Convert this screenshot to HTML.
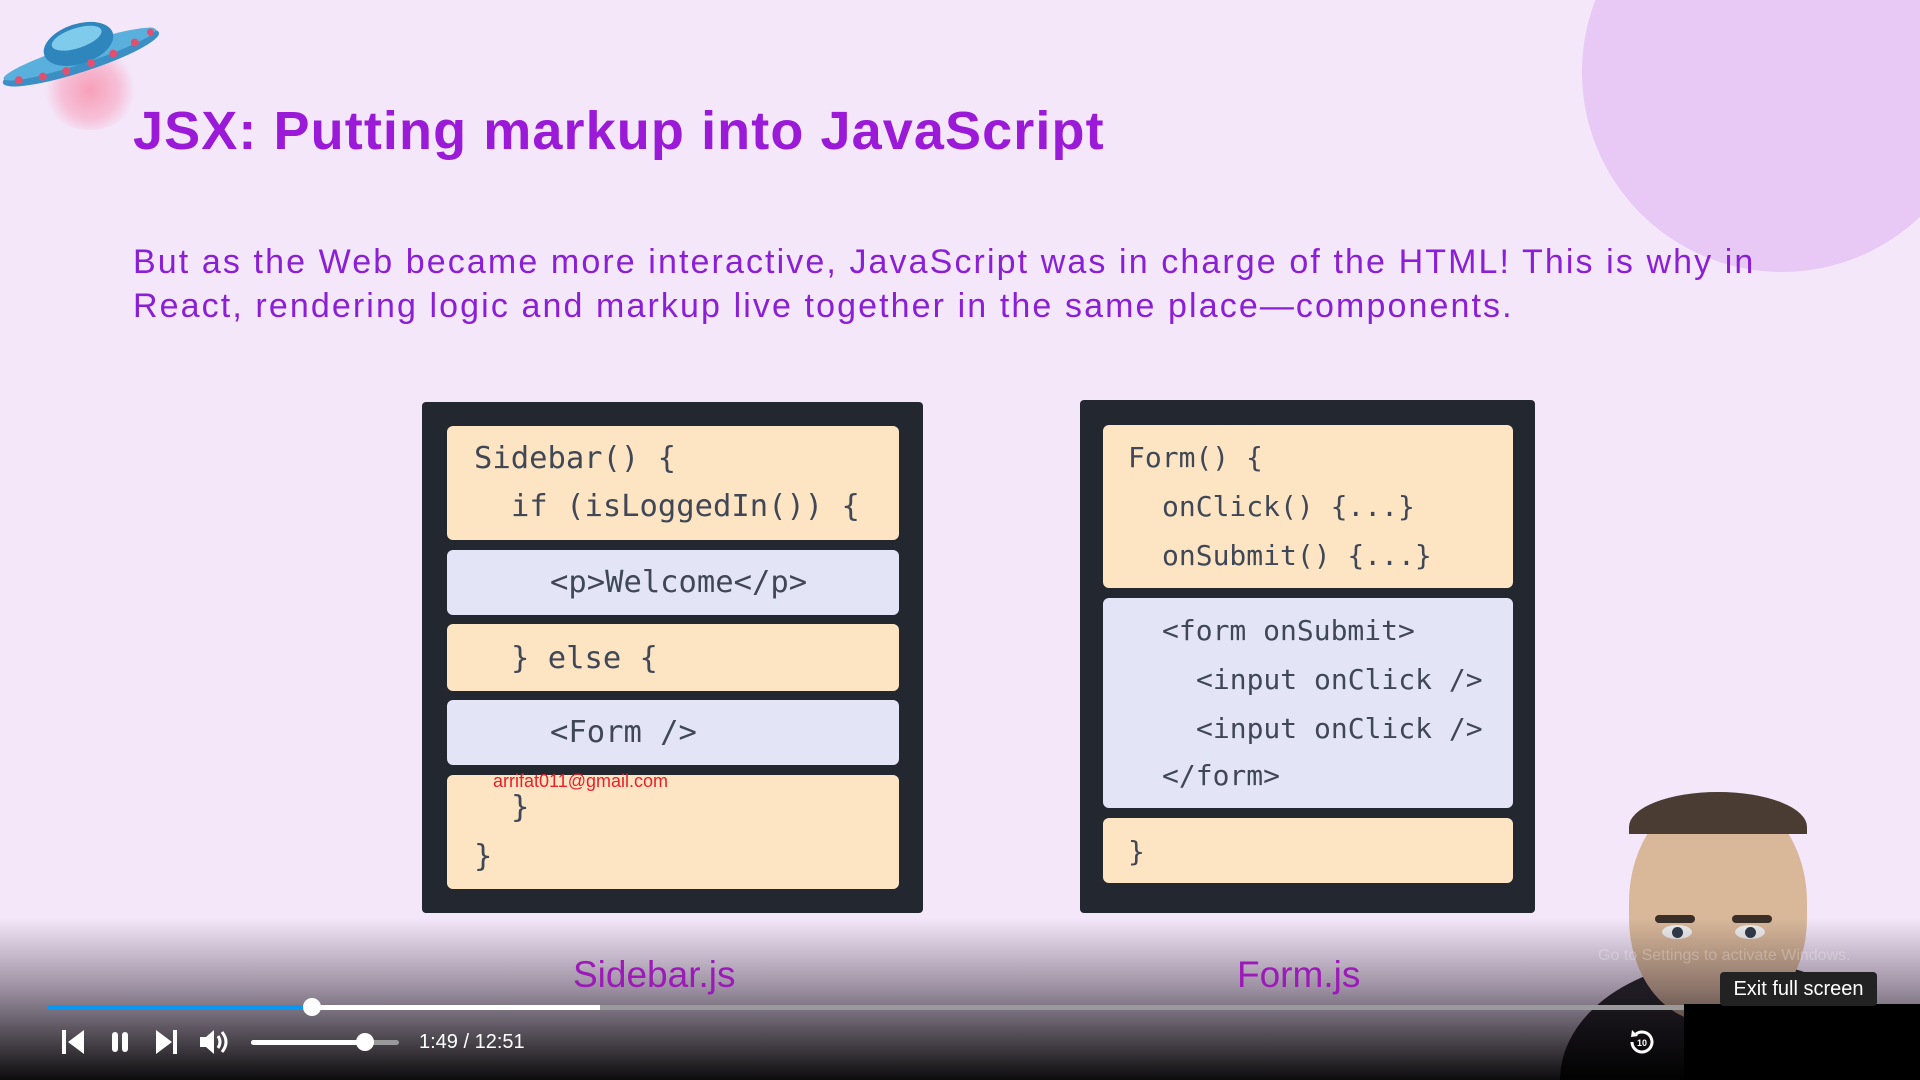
<!DOCTYPE html>
<html><head><meta charset="utf-8"><style>
*{margin:0;padding:0;box-sizing:border-box}
html,body{width:1920px;height:1080px;overflow:hidden}
body{background:#f4e7fa;position:relative;font-family:"Liberation Sans",sans-serif}
.abs{position:absolute}
.t{position:absolute;white-space:nowrap;font-family:"DejaVu Sans Mono","Liberation Mono",monospace;color:#404756;line-height:1;transform:translateY(-50%)}
.L{font-size:30.5px}
.R{font-size:28px}
.blk{position:absolute;border-radius:6px}
.y{background:#fde5c4}
.b{background:#e3e5f7}
</style></head><body>
<div class="abs" style="left:1582px;top:-128px;width:400px;height:400px;border-radius:50%;background:#e8c8f5"></div>

<!-- UFO -->
<div class="abs" style="left:40px;top:50px;width:100px;height:80px;border-radius:50%;background:radial-gradient(circle,#f7a0b8 0%,#f6c0d8 45%,rgba(244,231,250,0) 70%)"></div>
<svg class="abs" style="left:0;top:10px" width="165" height="80" viewBox="0 0 165 80">
<g transform="rotate(-18 80 45)">
<ellipse cx="80" cy="48" rx="82" ry="14" fill="#3b8fc4"/>
<ellipse cx="80" cy="44" rx="80" ry="10" fill="#5ab0dc"/>
<ellipse cx="82" cy="34" rx="36" ry="20" fill="#2f86bd"/>
<ellipse cx="82" cy="28" rx="26" ry="10" fill="#7fcbeb"/>
<g fill="#e2506f"><circle cx="14" cy="50" r="4"/><circle cx="38" cy="54" r="4"/><circle cx="62" cy="56" r="4"/><circle cx="88" cy="56" r="4"/><circle cx="112" cy="54" r="4"/><circle cx="136" cy="50" r="4"/><circle cx="154" cy="45" r="3.5"/></g>
</g></svg>

<div class="abs" style="left:133px;top:100px;font-size:54px;font-weight:bold;color:#9a1ad8;white-space:nowrap;letter-spacing:1.1px">JSX: Putting markup into JavaScript</div>
<div class="abs" style="left:133px;top:240px;font-size:34px;color:#8a1fd6;white-space:nowrap;line-height:44px;letter-spacing:2.1px">But as the Web became more interactive, JavaScript was in charge of the HTML! This is why in<br>React, rendering logic and markup live together in the same place—components.</div>

<!-- left box -->
<div class="abs" style="left:422px;top:402px;width:501px;height:511px;background:#23272f;border-radius:4px"></div>
<div class="blk y" style="left:447px;top:426px;width:452px;height:114px"></div>
<div class="blk b" style="left:447px;top:550px;width:452px;height:65px"></div>
<div class="blk y" style="left:447px;top:624px;width:452px;height:67px"></div>
<div class="blk b" style="left:447px;top:700px;width:452px;height:65px"></div>
<div class="blk y" style="left:447px;top:775px;width:452px;height:114px"></div>
<div class="t L" style="left:474px;top:459px">Sidebar() {</div>
<div class="t L" style="left:511px;top:507px">if (isLoggedIn()) {</div>
<div class="t L" style="left:550px;top:583px">&lt;p&gt;Welcome&lt;/p&gt;</div>
<div class="t L" style="left:511px;top:659px">} else {</div>
<div class="t L" style="left:550px;top:733px">&lt;Form /&gt;</div>
<div class="t L" style="left:511px;top:808px">}</div>
<div class="t L" style="left:474px;top:857px">}</div>
<div class="abs" style="left:493px;top:771px;font-size:18px;color:#e8202a">arrifat011@gmail.com</div>

<!-- right box -->
<div class="abs" style="left:1080px;top:400px;width:455px;height:513px;background:#23272f;border-radius:4px"></div>
<div class="blk y" style="left:1103px;top:425px;width:410px;height:163px"></div>
<div class="blk b" style="left:1103px;top:598px;width:410px;height:210px"></div>
<div class="blk y" style="left:1103px;top:818px;width:410px;height:65px"></div>
<div class="t R" style="left:1128px;top:458px">Form() {</div>
<div class="t R" style="left:1162px;top:507px">onClick() {...}</div>
<div class="t R" style="left:1162px;top:556px">onSubmit() {...}</div>
<div class="t R" style="left:1162px;top:631px">&lt;form onSubmit&gt;</div>
<div class="t R" style="left:1196px;top:680px">&lt;input onClick /&gt;</div>
<div class="t R" style="left:1196px;top:729px">&lt;input onClick /&gt;</div>
<div class="t R" style="left:1162px;top:776px">&lt;/form&gt;</div>
<div class="t R" style="left:1128px;top:852px">}</div>

<!-- person -->
<div class="abs" style="left:1560px;top:960px;width:340px;height:120px;border-radius:50% 50% 0 0 / 100% 100% 0 0;background:#1a1a1c"></div>
<div class="abs" style="left:1629px;top:792px;width:178px;height:230px;border-radius:48% 48% 45% 45%;background:#d9b89a"></div>
<div class="abs" style="left:1629px;top:792px;width:178px;height:70px;border-radius:50% 50% 0 0;background:#4a3c33;clip-path:inset(0 0 40% 0)"></div>
<div class="abs" style="left:1655px;top:915px;width:40px;height:8px;background:#3a2e28;border-radius:4px"></div>
<div class="abs" style="left:1732px;top:915px;width:40px;height:8px;background:#3a2e28;border-radius:4px"></div>
<div class="abs" style="left:1662px;top:925px;width:30px;height:14px;background:#f0f0f0;border-radius:50%"><div style="margin:2px auto;width:11px;height:11px;border-radius:50%;background:#2f3a48"></div></div>
<div class="abs" style="left:1735px;top:925px;width:30px;height:14px;background:#f0f0f0;border-radius:50%"><div style="margin:2px auto;width:11px;height:11px;border-radius:50%;background:#2f3a48"></div></div>

<!-- bottom gradient -->
<div class="abs" style="left:0;top:918px;width:1920px;height:162px;background:linear-gradient(rgba(0,0,0,0),rgba(40,30,45,0.45) 45%,rgba(0,0,0,0.95))"></div>

<div class="abs" style="left:573px;top:954px;font-size:37px;color:#9c1ab8;white-space:nowrap">Sidebar.js</div>
<div class="abs" style="left:1237px;top:954px;font-size:37px;color:#9c1ab8;white-space:nowrap">Form.js</div>

<div class="abs" style="left:1598px;top:947px;font-size:16px;color:rgba(255,255,255,0.25);white-space:nowrap">Go to Settings to activate Windows.</div>

<!-- progress -->
<div class="abs" style="left:48px;top:1005px;width:1636px;height:5px;background:#9a999c"></div>
<div class="abs" style="left:48px;top:1005px;width:552px;height:5px;background:#fff"></div>
<div class="abs" style="left:48px;top:1005px;width:264px;height:5px;background:#0897f2"></div>
<div class="abs" style="left:303px;top:998px;width:18px;height:18px;border-radius:50%;background:#fff"></div>

<div class="abs" style="left:1684px;top:1004px;width:236px;height:76px;background:#000"></div>
<div class="abs" style="left:1720px;top:972px;width:157px;height:34px;background:#222;border-radius:4px;color:#fff;font-size:20px;text-align:center;line-height:34px;white-space:nowrap">Exit full screen</div>

<!-- controls -->
<svg class="abs" style="left:60px;top:1028px" width="180" height="28" viewBox="0 0 180 28">
<g fill="#fff">
<rect x="2" y="2" width="4" height="24"/><path d="M24 2 L8 14 L24 26Z"/>
<rect x="52" y="4" width="6" height="20" rx="3"/><rect x="62" y="4" width="6" height="20" rx="3"/>
<path d="M96 2 L112 14 L96 26Z"/><rect x="113" y="2" width="4" height="24"/>
<path d="M140 9 h6 l8 -7 v24 l-8 -7 h-6z"/>
</g>
<path d="M158 8 q4 6 0 12 M162 4 q8 10 0 20" stroke="#fff" stroke-width="3" fill="none"/>
</svg>
<div class="abs" style="left:251px;top:1040px;width:148px;height:5px;background:#9a999c;border-radius:3px"></div>
<div class="abs" style="left:251px;top:1040px;width:114px;height:5px;background:#fff;border-radius:3px"></div>
<div class="abs" style="left:356px;top:1033px;width:18px;height:18px;border-radius:50%;background:#fff"></div>
<div class="abs" style="left:419px;top:1031px;font-size:20px;color:#fff;white-space:nowrap">1:49 / 12:51</div>

<svg class="abs" style="left:1628px;top:1028px" width="28" height="28" viewBox="0 0 28 28">
<path d="M8 6 A10 10 0 1 1 4 14" stroke="#fff" stroke-width="3" fill="none"/>
<path d="M4 2 L10 8 L3 9Z" fill="#fff"/>
<text x="14" y="18" font-size="9" font-weight="bold" fill="#fff" text-anchor="middle" font-family="Liberation Sans">10</text>
</svg>
</body></html>
